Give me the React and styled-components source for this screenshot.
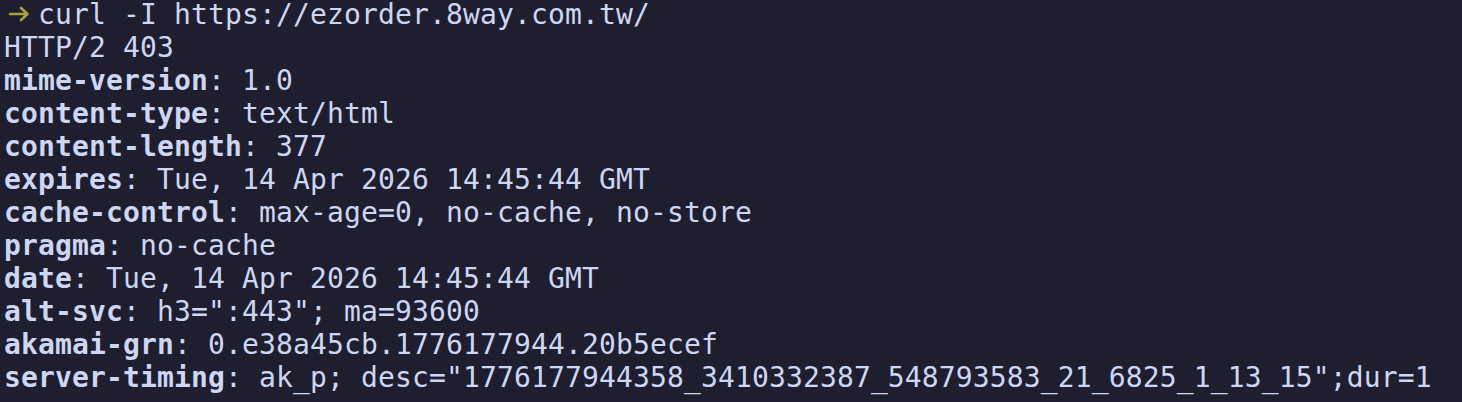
import React from 'react';
import styled, { createGlobalStyle } from 'styled-components';

const GlobalStyle = createGlobalStyle`
  html, body {
    margin: 0;
    padding: 0;
    background: #1e1e2e;
  }
`;

const Terminal = styled.div`
  width: 1462px;
  height: 402px;
  box-sizing: border-box;
  padding: 0 0 0 4px;
  margin-top: -2px;
  background: #1e1e2e;
  color: #cdd6f4;
  font-family: "DejaVu Sans Mono", "Liberation Mono", monospace;
  font-size: 28px;
  letter-spacing: 0.14px;
  line-height: 33px;
  white-space: pre;
  overflow: hidden;
`;

const Line = styled.div`
  height: 33px;
  display: flex;
  align-items: center;
`;

const Prompt = styled.svg`
  width: 34px;
  height: 33px;
  flex-shrink: 0;
`;

const Key = styled.span`
  font-weight: bold;
`;

const headers = [
  ['mime-version', '1.0'],
  ['content-type', 'text/html'],
  ['content-length', '377'],
  ['expires', 'Tue, 14 Apr 2026 14:45:44 GMT'],
  ['cache-control', 'max-age=0, no-cache, no-store'],
  ['pragma', 'no-cache'],
  ['date', 'Tue, 14 Apr 2026 14:45:44 GMT'],
  ['alt-svc', 'h3=":443"; ma=93600'],
  ['akamai-grn', '0.e38a45cb.1776177944.20b5ecef'],
  ['server-timing', 'ak_p; desc="1776177944358_3410332387_548793583_21_6825_1_13_15";dur=1'],
];

const App = () => (
  <>
    <GlobalStyle />
    <Terminal>
      <Line>
        <Prompt viewBox="0 0 34 33">
          <path
            d="M6 16 H23 M17 10 L23.5 16 L17 22"
            fill="none"
            stroke="#a6a33c"
            strokeWidth="2.6"
            strokeLinecap="round"
            strokeLinejoin="round"
          />
        </Prompt>
        <span>curl -I https://ezorder.8way.com.tw/</span>
      </Line>
      <Line>HTTP/2 403</Line>
      {headers.map(([k, v]) => (
        <Line key={k}>
          <Key>{k}</Key>
          <span>: {v}</span>
        </Line>
      ))}
    </Terminal>
  </>
);

export default App;
